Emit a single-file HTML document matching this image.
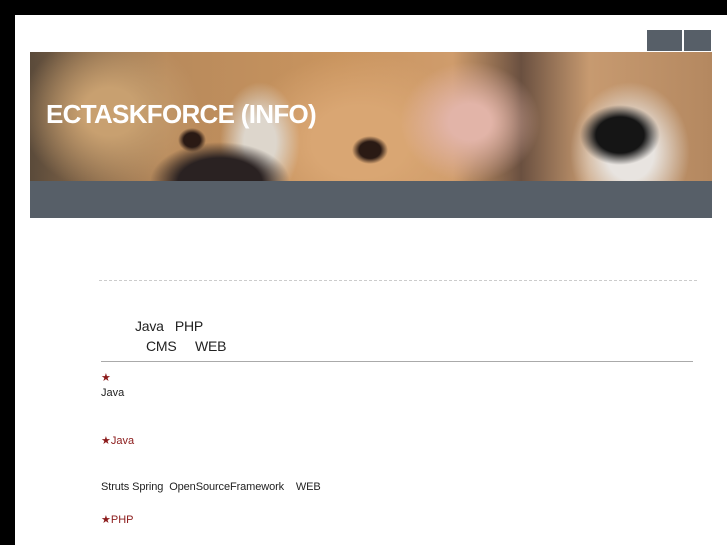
<!DOCTYPE html>
<html><head><meta charset="utf-8"><style>
html,body{margin:0;padding:0;}
body{width:727px;height:545px;background:#000;position:relative;overflow:hidden;font-family:"Liberation Sans",sans-serif;}
#page{position:absolute;left:15px;top:15px;width:712px;height:530px;background:#fff;}
.btn{position:absolute;top:15px;height:21px;background:#575f68;}
#banner{position:absolute;left:15px;top:37px;width:682px;height:129px;overflow:hidden;
background:
radial-gradient(ellipse 40px 30px at 590px 83px,#151515 60%,transparent 100%),
radial-gradient(ellipse 60px 70px at 600px 100px,#e8e4e0 40%,transparent 100%),
radial-gradient(ellipse 70px 40px at 190px 130px,#2a2222 60%,transparent 100%),
radial-gradient(ellipse 14px 12px at 162px 88px,#2a1a14 60%,transparent 100%),
radial-gradient(ellipse 18px 14px at 340px 98px,#2a1a14 60%,transparent 100%),
radial-gradient(ellipse 70px 60px at 440px 70px,#e2b4a8 30%,transparent 100%),
radial-gradient(ellipse 40px 60px at 230px 90px,#ddd6cc 40%,transparent 100%),
radial-gradient(ellipse 120px 90px at 330px 90px,#d9a673 40%,transparent 100%),
radial-gradient(ellipse 90px 80px at 80px 60px,#c8a070 30%,transparent 100%),
linear-gradient(90deg,#5a4a3a 0%,#b88a5c 20%,#c9945e 45%,#cf9c6c 62%,#6a5040 72%,#c79a70 82%,#b48860 100%);}
#banner h1{position:absolute;left:16px;top:47px;margin:0;color:#fff;font-size:26px;font-weight:bold;letter-spacing:-0.7px;}
#bar{position:absolute;left:15px;top:166px;width:682px;height:37px;background:#575f68;}
.t{position:absolute;color:#222;white-space:pre;}
.r{color:#8b1a1a;}
</style></head><body>
<div id="page">
<div class="btn" style="left:632px;width:35px"></div>
<div class="btn" style="left:669px;width:27px"></div>
<div id="banner"><h1>ECTASKFORCE (INFO)</h1></div>
<div id="bar"></div>
<div style="position:absolute;left:84px;top:265px;width:598px;border-top:1px dashed #ccc"></div>
<div class="t" style="left:120px;top:303px;font-size:14px;letter-spacing:-0.2px">Java   PHP</div>
<div class="t" style="left:131px;top:323px;font-size:14px;letter-spacing:-0.2px">CMS     WEB</div>
<div style="position:absolute;left:86px;top:346px;width:592px;border-top:1px solid #aaa"></div>
<div class="t r" style="left:86px;top:356px;font-size:11px">★</div>
<div class="t" style="left:86px;top:372px;font-size:11px">Java</div>
<div class="t r" style="left:86px;top:419px;font-size:11px">★Java</div>
<div class="t" style="left:86px;top:466px;font-size:11px;letter-spacing:-0.1px">Struts Spring  OpenSourceFramework    WEB</div>
<div class="t r" style="left:86px;top:498px;font-size:11px">★PHP</div>
</div>
</body></html>
